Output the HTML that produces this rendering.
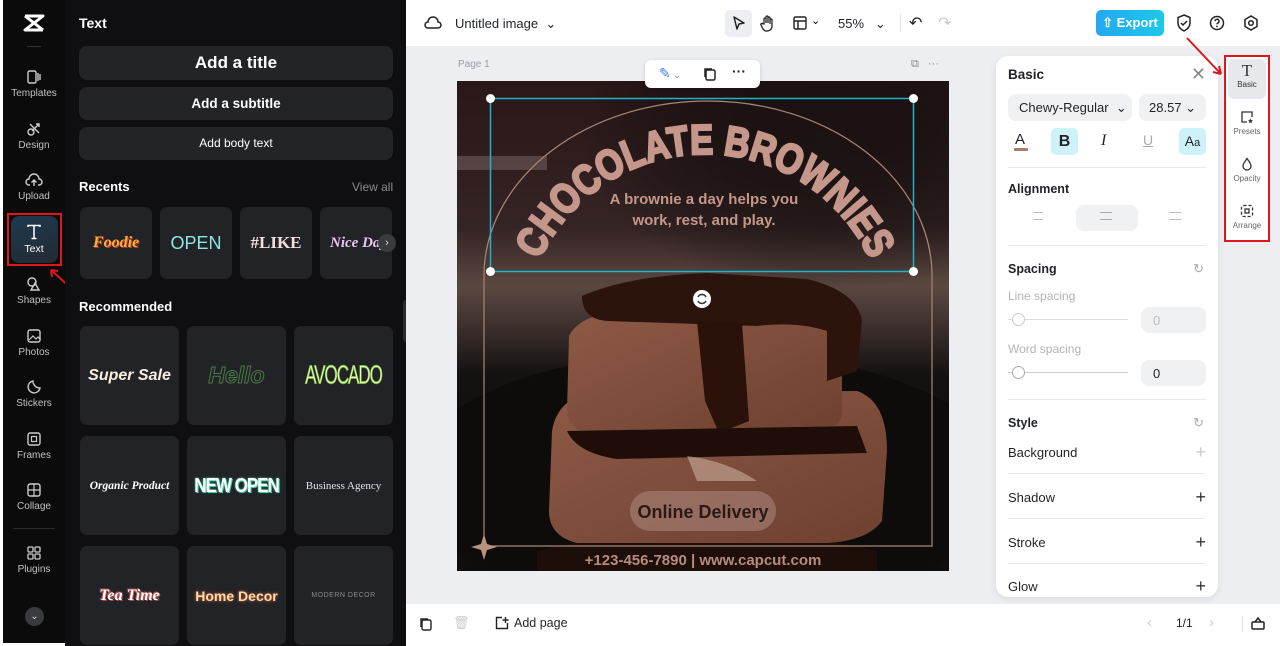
<!DOCTYPE html>
<html><head><meta charset="utf-8"><style>
*{box-sizing:border-box;margin:0;padding:0}
body{width:1280px;height:646px;overflow:hidden;background:#fff;font-family:"Liberation Sans",sans-serif;position:relative}
.a{position:absolute}
.side{left:3px;top:0;width:62px;height:643px;background:#0b0b0c}
.nav{position:absolute;left:0;width:62px;text-align:center;color:#bfc1c5;font-size:10px}
.nav svg{display:block;margin:0 auto 3px}
.panel{left:65px;top:0;width:341px;height:646px;background:#0f0f11;color:#fff}
.btn{position:absolute;left:14px;width:314px;background:#232428;border-radius:8px;color:#fff;text-align:center;font-weight:bold}
.tile{position:absolute;background:#222327;border-radius:7px;display:flex;align-items:center;justify-content:center;overflow:hidden;white-space:nowrap}
.top{left:406px;top:0;width:874px;height:46px;background:#fff}
.canvas{left:406px;top:46px;width:874px;height:558px;background:#eceef1}
.bot{left:406px;top:604px;width:872px;height:40px;background:#fff}
.rp{left:996px;top:56px;width:222px;height:541px;background:#fff;border-radius:12px;box-shadow:0 2px 8px rgba(0,0,0,.08);font-size:13px;color:#1f2329}
.hr{position:absolute;left:12px;width:198px;height:1px;background:#e8e9eb}
.lab{position:absolute;left:12px}
.plus{position:absolute;right:12px;font-size:18px;color:#333;line-height:1}
.gbox{position:absolute;background:#f0f1f3;border-radius:8px}
</style></head><body>

<div class="a side">
  <svg class="a" style="left:19px;top:13px" width="24" height="20" viewBox="0 0 24 20"><path d="M3 3h18L3 17h18M3 3l18 14" stroke="#fff" stroke-width="3" fill="none" stroke-linejoin="round"/></svg>
  <div class="a" style="left:24px;top:46px;width:14px;height:1px;background:#333"></div>
  <div class="nav" style="top:69px"><svg width="16" height="16" viewBox="0 0 16 16"><rect x="2" y="2" width="8" height="12" rx="1.5" stroke="#ccc" fill="none" stroke-width="1.4"/><path d="M12 4v8M14 5v6" stroke="#ccc" stroke-width="1.4"/></svg>Templates</div>
  <div class="nav" style="top:121px"><svg width="16" height="16" viewBox="0 0 16 16"><circle cx="5" cy="11" r="3" stroke="#ccc" fill="none" stroke-width="1.4"/><path d="M4 3l9 9M13 3L6 10M10 3h3v3" stroke="#ccc" fill="none" stroke-width="1.4"/></svg>Design</div>
  <div class="nav" style="top:172px"><svg width="18" height="16" viewBox="0 0 18 16"><path d="M5 13H4a3 3 0 0 1 0-6 5 5 0 0 1 10 0 3 3 0 0 1 0 6h-1M9 14V8M6.5 10.5L9 8l2.5 2.5" stroke="#ccc" fill="none" stroke-width="1.4"/></svg>Upload</div>
  <div class="a" style="left:4px;top:213px;width:55px;height:53px;border:2px solid #e0161b"></div>
  <div class="a" style="left:8px;top:216px;width:47px;height:47px;border-radius:8px;background:linear-gradient(160deg,#1d3a4f,#242a32)"></div>
  <div class="nav" style="top:224px;color:#fff;font-size:10.5px"><svg width="16" height="16" viewBox="0 0 16 16"><path d="M2 3V1.5h12V3M8 1.5V14.5M5.5 14.5h5" stroke="#fff" fill="none" stroke-width="1.5"/></svg>Text</div>
  <svg class="a" style="left:44px;top:266px" width="28" height="26" viewBox="0 0 28 26"><path d="M26 24L4 4M4 4l1 7M4 4l7 1" stroke="#e0161b" stroke-width="2" fill="none"/></svg>
  <div class="nav" style="top:276px"><svg width="16" height="16" viewBox="0 0 16 16"><circle cx="6" cy="6" r="4" stroke="#ccc" fill="none" stroke-width="1.4"/><path d="M9 7l4 7H5z" stroke="#ccc" fill="none" stroke-width="1.4"/></svg>Shapes</div>
  <div class="nav" style="top:328px"><svg width="16" height="16" viewBox="0 0 16 16"><rect x="2" y="2" width="12" height="12" rx="2" stroke="#ccc" fill="none" stroke-width="1.4"/><path d="M3 12l4-4 3 3 2-2 2 2" stroke="#ccc" fill="none" stroke-width="1.2"/></svg>Photos</div>
  <div class="nav" style="top:379px"><svg width="16" height="16" viewBox="0 0 16 16"><path d="M14 9A6 6 0 1 1 7 2c0 4 3 7 7 7z" stroke="#ccc" fill="none" stroke-width="1.4"/></svg>Stickers</div>
  <div class="nav" style="top:431px"><svg width="16" height="16" viewBox="0 0 16 16"><rect x="2" y="2" width="12" height="12" rx="2" stroke="#ccc" fill="none" stroke-width="1.4"/><rect x="5.5" y="5.5" width="5" height="5" stroke="#ccc" fill="none" stroke-width="1.2"/></svg>Frames</div>
  <div class="nav" style="top:482px"><svg width="16" height="16" viewBox="0 0 16 16"><rect x="2" y="2" width="12" height="12" rx="2" stroke="#ccc" fill="none" stroke-width="1.4"/><path d="M8 2v12M2 8h12" stroke="#ccc" stroke-width="1.2"/></svg>Collage</div>
  <div class="a" style="left:10px;top:528px;width:42px;height:1px;background:#2a2a2a"></div>
  <div class="nav" style="top:545px"><svg width="16" height="16" viewBox="0 0 16 16"><rect x="2" y="2" width="5" height="5" rx="1" stroke="#ccc" fill="none" stroke-width="1.3"/><rect x="9" y="2" width="5" height="5" rx="1" stroke="#ccc" fill="none" stroke-width="1.3"/><rect x="2" y="9" width="5" height="5" rx="1" stroke="#ccc" fill="none" stroke-width="1.3"/><rect x="9" y="9" width="5" height="5" rx="1" stroke="#ccc" fill="none" stroke-width="1.3"/></svg>Plugins</div>
  <div class="a" style="left:22px;top:607px;width:19px;height:19px;border-radius:50%;background:#3a3b3f;color:#ccc;font-size:10px;text-align:center;line-height:19px">⌄</div>
</div>

<div class="a panel">
  <div class="a" style="left:14px;top:15px;font-size:14px;font-weight:bold">Text</div>
  <div class="btn" style="top:46px;height:34px;line-height:34px;font-size:17px">Add a title</div>
  <div class="btn" style="top:87px;height:33px;line-height:33px;font-size:13.5px">Add a subtitle</div>
  <div class="btn" style="top:127px;height:33px;line-height:33px;font-size:12px;font-weight:normal">Add body text</div>
  <div class="a" style="left:14px;top:179px;font-size:13px;font-weight:bold">Recents</div>
  <div class="a" style="left:287px;top:180px;font-size:12px;color:#8a8b8f">View all</div>
  <div class="tile" style="left:15px;top:207px;width:72px;height:72px;color:#f7b13a;font-weight:bold;font-style:italic;font-size:16px;font-family:'Liberation Serif',serif;text-shadow:1px 1px 0 #c0392b">Foodie</div>
  <div class="tile" style="left:95px;top:207px;width:72px;height:72px;color:#8ee6e0;font-size:18px">OPEN</div>
  <div class="tile" style="left:175px;top:207px;width:72px;height:72px;color:#f3dede;font-size:17px;font-weight:bold;font-family:'Liberation Serif',serif">#LIKE</div>
  <div class="tile" style="left:255px;top:207px;width:72px;height:72px;justify-content:flex-start;padding-left:10px;color:#e9c8f0;font-style:italic;font-weight:bold;font-size:15px;font-family:'Liberation Serif',serif">Nice Day</div>
  <div class="a" style="left:313px;top:234px;width:18px;height:18px;border-radius:50%;background:#3a3b3f;color:#ddd;font-size:11px;text-align:center;line-height:18px">›</div>
  <div class="a" style="left:14px;top:299px;font-size:13px;font-weight:bold">Recommended</div>
  <div class="tile" style="left:15px;top:326px;width:99px;height:99px;color:#fbeedd;font-weight:bold;font-style:italic;font-size:16px">Super Sale</div>
  <div class="tile" style="left:122px;top:326px;width:99px;height:99px;color:transparent;-webkit-text-stroke:1px #4a7a45;font-weight:bold;font-style:italic;font-size:23px">Hello</div>
  <div class="tile" style="left:229px;top:326px;width:99px;height:99px;color:#f2f7d8;-webkit-text-stroke:0.6px #7bbf34;font-size:17px;letter-spacing:-1px"><span style="display:inline-block;transform:scaleY(1.5)">AVOCADO</span></div>
  <div class="tile" style="left:15px;top:436px;width:99px;height:99px;color:#fff;font-style:italic;font-size:11.5px;font-family:'Liberation Serif',serif;font-weight:bold">Organic Product</div>
  <div class="tile" style="left:122px;top:436px;width:99px;height:99px;color:#fff;font-weight:bold;font-size:17px;letter-spacing:-1px;text-shadow:0 0 2px #3ed1a0,1px 1px 0 #3ed1a0"><span style="display:inline-block;transform:scaleY(1.2)">NEW OPEN</span></div>
  <div class="tile" style="left:229px;top:436px;width:99px;height:99px;color:#dfe3ea;font-size:11px;font-family:'Liberation Serif',serif">Business Agency</div>
  <div class="tile" style="left:15px;top:546px;width:99px;height:99px;color:#fff;font-weight:bold;font-style:italic;font-size:16px;font-family:'Liberation Serif',serif;text-shadow:1px 1px 0 #b04848,-1px -1px 0 #b04848">Tea Time</div>
  <div class="tile" style="left:122px;top:546px;width:99px;height:99px;color:#ffd9a8;font-weight:bold;font-size:14px;text-shadow:0 0 3px #d2693a">Home Decor</div>
  <div class="tile" style="left:229px;top:546px;width:99px;height:99px;color:#8a8b8f;font-size:7px;letter-spacing:0.5px">MODERN DECOR</div>
</div>
<div class="a" style="left:403px;top:300px;width:8px;height:42px;background:#2a2b2e;border-radius:3px"></div>

<div class="a top">
  <svg class="a" style="left:18px;top:15px" width="18" height="16" viewBox="0 0 18 16"><path d="M5 13H4a3 3 0 0 1 0-6 5 5 0 0 1 10 0 3 3 0 0 1 0 6z" stroke="#222" fill="none" stroke-width="1.5"/></svg>
  <div class="a" style="left:49px;top:16px;font-size:13px;color:#1f2329">Untitled image &nbsp;⌄</div>
  <div class="a" style="left:319px;top:10px;width:27px;height:27px;background:#eceef1;border-radius:5px"></div>
  <svg class="a" style="left:325px;top:15px" width="16" height="17" viewBox="0 0 16 17"><path d="M3 2l10 6-5 1-2 5z" stroke="#222" fill="none" stroke-width="1.5" stroke-linejoin="round"/></svg>
  <svg class="a" style="left:354px;top:14px" width="16" height="18" viewBox="0 0 16 18"><path d="M4 10V5a1 1 0 0 1 2 0v4V3a1 1 0 0 1 2 0v6V4a1 1 0 0 1 2 0v6-4a1 1 0 0 1 2 0v6a5 5 0 0 1-9 3l-2-4a1 1 0 0 1 2-1z" stroke="#222" fill="none" stroke-width="1.3"/></svg>
  <svg class="a" style="left:387px;top:16px" width="14" height="14" viewBox="0 0 14 14"><rect x="1" y="1" width="12" height="12" rx="1.5" stroke="#222" fill="none" stroke-width="1.4"/><path d="M1 5h12M5 5v8" stroke="#222" stroke-width="1.4"/></svg>
  <div class="a" style="left:405px;top:14px;font-size:11px">⌄</div>
  <div class="a" style="left:432px;top:16px;font-size:13px;color:#1f2329">55% &nbsp;&nbsp;⌄</div>
  <div class="a" style="left:494px;top:14px;width:1px;height:18px;background:#e3e3e3"></div>
  <div class="a" style="left:503px;top:13px;font-size:16px;color:#222">↶</div>
  <div class="a" style="left:532px;top:13px;font-size:16px;color:#ccc">↷</div>
  <div class="a" style="left:690px;top:10px;width:68px;height:26px;border-radius:5px;background:linear-gradient(90deg,#22a8f0,#1ec8e8);color:#fff;font-size:13px;font-weight:bold;line-height:26px;text-align:center">⇧ Export</div>
  <svg class="a" style="left:770px;top:14px" width="16" height="18" viewBox="0 0 16 18"><path d="M8 1l6 2.5V9c0 4-3 6.5-6 8-3-1.5-6-4-6-8V3.5z" stroke="#222" fill="none" stroke-width="1.5"/><path d="M5 9l2 2 4-4" stroke="#222" fill="none" stroke-width="1.5"/></svg>
  <svg class="a" style="left:803px;top:15px" width="16" height="16" viewBox="0 0 16 16"><circle cx="8" cy="8" r="6.5" stroke="#222" fill="none" stroke-width="1.5"/><path d="M6 6.2a2 2 0 1 1 2.5 2c-.4.2-.5.5-.5 1.2" stroke="#222" fill="none" stroke-width="1.4"/><circle cx="8" cy="11.5" r=".9" fill="#222"/></svg>
  <svg class="a" style="left:837px;top:15px" width="16" height="16" viewBox="0 0 16 16"><path d="M8 1l6 3.5v7L8 15l-6-3.5v-7z" stroke="#222" fill="none" stroke-width="1.5"/><circle cx="8" cy="8" r="2.3" stroke="#222" fill="none" stroke-width="1.5"/></svg>
</div>

<div class="a canvas">
  <div class="a" style="left:52px;top:13px;font-size:10px;color:#9a9da3">Page 1</div>
  <div class="a" style="left:505px;top:12px;font-size:11px;color:#888">⧉ &nbsp;&nbsp;···</div>
</div>

<svg class="a" style="left:457px;top:81px" width="492" height="490" viewBox="0 0 492 490">
  <defs>
    <linearGradient id="bg" x1="0" y1="0" x2="0" y2="1"><stop offset="0" stop-color="#2a1718"/><stop offset=".3" stop-color="#352425"/><stop offset=".42" stop-color="#5a4840"/><stop offset=".5" stop-color="#3d302c"/><stop offset=".6" stop-color="#141111"/><stop offset="1" stop-color="#100d0d"/></linearGradient>
    <linearGradient id="br" x1="0" y1="0" x2="1" y2="1"><stop offset="0" stop-color="#8e5a46"/><stop offset="1" stop-color="#6e4030"/></linearGradient>
    <radialGradient id="lt" cx=".75" cy=".2" r=".5"><stop offset="0" stop-color="#1a1212" stop-opacity=".9"/><stop offset="1" stop-color="#000" stop-opacity="0"/></radialGradient>
  </defs>
  <rect width="492" height="490" fill="url(#bg)"/>
  <rect width="492" height="300" fill="url(#lt)"/>
  <rect x="0" y="75" width="90" height="14" fill="#9a8a88" opacity=".35"/>
  <ellipse cx="250" cy="400" rx="300" ry="130" fill="#0e0b0b"/>
  <path d="M80 470 Q250 430 420 470 L420 490 L80 490z" fill="#1e0e09"/>
  <path d="M95 350 Q100 320 130 312 L400 310 Q430 320 430 370 L425 440 Q410 460 370 462 L120 462 Q92 455 92 430z" fill="url(#br)"/>
  <path d="M112 255 Q120 238 150 232 L360 235 Q385 240 385 265 L385 335 Q380 350 355 352 L130 352 Q112 348 110 330z" fill="url(#br)"/>
  <path d="M125 215 Q170 195 250 192 L350 198 Q400 210 405 240 L400 290 L370 300 L370 250 Q340 240 300 245 L150 240 Q125 238 125 215z" fill="#2c140d"/>
  <path d="M240 240 L285 242 L292 340 L262 352 L248 320z" fill="#2a120b"/>
  <path d="M110 350 L400 345 L410 372 L160 378 Q120 372 110 350z" fill="#1f0d08"/>
  <path d="M230 375 Q270 380 300 400 L240 400z" fill="#d8c0b0" opacity=".5"/>
  <path d="M27 455 V195 A224 175 0 0 1 475 195 V465 H27" stroke="#a88678" stroke-width="1.2" fill="none"/>
  <path d="M27 453 l3 10 10 3-10 3-3 10-3-10-10-3 10-3z" fill="#b8917f"/>
  <path id="arc" d="M66 255 A182 182 0 0 1 430 255" fill="none"/>
  <text font-family="Liberation Sans,sans-serif" font-weight="bold" font-size="42" fill="#c4978a" stroke="#c4978a" stroke-width="2.5"><textPath href="#arc" startOffset="50%" text-anchor="middle" textLength="415" lengthAdjust="spacingAndGlyphs">CHOCOLATE BROWNIES</textPath></text>
  <text x="247" y="123" text-anchor="middle" font-family="Liberation Sans,sans-serif" font-weight="bold" font-size="15" fill="#c4978a">A brownie a day helps you</text>
  <text x="247" y="144" text-anchor="middle" font-family="Liberation Sans,sans-serif" font-weight="bold" font-size="15" fill="#c4978a">work, rest, and play.</text>
  <rect x="173" y="410" width="146" height="40" rx="20" fill="#a8837a" opacity=".6"/>
  <text x="246" y="437" text-anchor="middle" font-family="Liberation Sans,sans-serif" font-weight="bold" font-size="18" fill="#2a1a16">Online Delivery</text>
  <text x="246" y="484" text-anchor="middle" font-family="Liberation Sans,sans-serif" font-weight="bold" font-size="15" fill="#b58c7e">+123-456-7890  |  www.capcut.com</text>
  <rect x="33.5" y="17.5" width="423" height="173" fill="none" stroke="#1fb3c9" stroke-width="1.5"/>
  <circle cx="33.5" cy="17.5" r="4.5" fill="#fff"/><circle cx="456.5" cy="17.5" r="4.5" fill="#fff"/>
  <circle cx="33.5" cy="190.5" r="4.5" fill="#fff"/><circle cx="456.5" cy="190.5" r="4.5" fill="#fff"/>
  <circle cx="245" cy="218" r="9" fill="#fff"/>
  <path d="M241 216a4.5 4.5 0 0 1 8 0M249 220a4.5 4.5 0 0 1-8 0" stroke="#333" stroke-width="1.5" fill="none"/>
</svg>

<div class="a" style="left:645px;top:60px;width:115px;height:28px;background:#fff;border-radius:6px;box-shadow:0 1px 4px rgba(0,0,0,.15)">
  <div class="a" style="left:14px;top:5px;font-size:14px;color:#3b82f6">✎<span style="font-size:9px;color:#888"> ⌄</span></div>
  <svg class="a" style="left:58px;top:7px" width="14" height="14" viewBox="0 0 14 14"><rect x="3" y="3" width="9" height="10" rx="1.5" stroke="#222" fill="none" stroke-width="1.5"/><path d="M2 10V2h7" stroke="#222" fill="none" stroke-width="1.5"/></svg>
  <div class="a" style="left:87px;top:3px;font-size:14px;font-weight:bold;color:#222">···</div>
</div>

<div class="a rp">
  <div class="a" style="left:12px;top:11px;font-size:13.5px;font-weight:bold">Basic</div>
  <div class="a" style="right:12px;top:8px;font-size:18px;color:#888">✕</div>
  <div class="gbox" style="left:12px;top:38px;width:124px;height:27px"><span class="a" style="left:11px;top:6px">Chewy-Regular &nbsp;⌄</span></div>
  <div class="gbox" style="left:143px;top:38px;width:67px;height:27px"><span class="a" style="left:10px;top:6px">28.57 ⌄</span></div>
  <div class="a" style="left:19px;top:75px;font-size:15px">A</div><div class="a" style="left:18px;top:92px;width:14px;height:3px;background:#b07a6a;border-radius:1px"></div>
  <div class="a" style="left:55px;top:72px;width:27px;height:27px;background:#cdf3f8;border-radius:5px;text-align:center;line-height:27px;font-size:16px;font-weight:bold">B</div>
  <div class="a" style="left:105px;top:76px;font-size:16px;font-style:italic;font-family:'Liberation Serif',serif">I</div>
  <div class="a" style="left:147px;top:76px;font-size:14px;color:#aaa;text-decoration:underline">U</div>
  <div class="a" style="left:183px;top:72px;width:27px;height:27px;background:#cdf3f8;border-radius:5px;text-align:center;line-height:27px;font-size:14px">A<span style="font-size:11px">a</span></div>
  <div class="hr" style="top:111px"></div>
  <div class="lab" style="top:126px;font-weight:bold;font-size:12.5px">Alignment</div>
  <div class="gbox" style="left:80px;top:149px;width:62px;height:26px"></div>
  <div class="a" style="left:37px;top:156px;width:10px;height:8px;border-top:1px solid #bbb;border-bottom:1px solid #bbb"></div>
  <div class="a" style="left:104px;top:156px;width:12px;height:8px;border-top:1px solid #aaa;border-bottom:1px solid #aaa"></div>
  <div class="a" style="left:173px;top:156px;width:12px;height:8px;border-top:1px solid #bbb;border-bottom:1px solid #bbb"></div>
  <div class="hr" style="top:189px"></div>
  <div class="lab" style="top:206px;font-weight:bold;font-size:12.5px">Spacing</div>
  <div class="a" style="right:14px;top:205px;color:#aaa">↻</div>
  <div class="lab" style="top:233px;color:#b0b3b8;font-size:12px">Line spacing</div>
  <div class="a" style="left:12px;top:263px;width:120px;height:1px;background:#ddd"></div>
  <div class="a" style="left:16px;top:257px;width:13px;height:13px;border-radius:50%;background:#fff;border:1px solid #ccc"></div>
  <div class="gbox" style="left:145px;top:251px;width:65px;height:26px"><span class="a" style="left:12px;top:6px;color:#bbb">0</span></div>
  <div class="lab" style="top:286px;color:#b0b3b8;font-size:12px">Word spacing</div>
  <div class="a" style="left:12px;top:316px;width:120px;height:1px;background:#ccc"></div>
  <div class="a" style="left:16px;top:310px;width:13px;height:13px;border-radius:50%;background:#fff;border:1px solid #aaa"></div>
  <div class="gbox" style="left:145px;top:304px;width:65px;height:26px"><span class="a" style="left:12px;top:6px">0</span></div>
  <div class="hr" style="top:343px"></div>
  <div class="lab" style="top:360px;font-weight:bold;font-size:12.5px">Style</div>
  <div class="a" style="right:14px;top:359px;color:#aaa">↻</div>
  <div class="lab" style="top:389px">Background</div><div class="plus" style="top:387px;color:#ccc">+</div>
  <div class="hr" style="top:417px"></div>
  <div class="lab" style="top:434px">Shadow</div><div class="plus" style="top:432px">+</div>
  <div class="hr" style="top:462px"></div>
  <div class="lab" style="top:479px">Stroke</div><div class="plus" style="top:477px">+</div>
  <div class="hr" style="top:507px"></div>
  <div class="lab" style="top:523px">Glow</div><div class="plus" style="top:521px">+</div>
</div>

<div class="a" style="left:1224px;top:55px;width:46px;height:187px;background:#fff;border:2px solid #e0161b"></div>
<div class="a" style="left:1228px;top:59px;width:38px;height:40px;background:#e6e8eb;border-radius:6px"></div>
<div class="a" style="left:1226px;top:62px;width:42px;text-align:center;font-size:8px;color:#333"><div style="font-size:17px;font-family:'Liberation Serif',serif;line-height:18px">T</div>Basic</div>
<div class="a" style="left:1226px;top:110px;width:42px;text-align:center;font-size:8px;color:#666"><svg width="14" height="14" viewBox="0 0 14 14" style="display:block;margin:0 auto 3px"><path d="M7 12H2V2h10v5" stroke="#333" fill="none" stroke-width="1.3"/><path d="M10.5 8.5l.8 1.6 1.7.2-1.3 1.2.3 1.7-1.5-.8-1.5.8.3-1.7-1.3-1.2 1.7-.2z" fill="#333"/></svg>Presets</div>
<div class="a" style="left:1226px;top:157px;width:42px;text-align:center;font-size:8px;color:#666"><svg width="14" height="14" viewBox="0 0 14 14" style="display:block;margin:0 auto 3px"><path d="M7 1.5C5 4.5 3 6.5 3 9a4 4 0 0 0 8 0c0-2.5-2-4.5-4-7.5z" stroke="#333" fill="none" stroke-width="1.3"/></svg>Opacity</div>
<div class="a" style="left:1226px;top:204px;width:42px;text-align:center;font-size:8px;color:#666"><svg width="14" height="14" viewBox="0 0 14 14" style="display:block;margin:0 auto 3px"><rect x="1.5" y="1.5" width="11" height="11" rx="2" stroke="#333" fill="none" stroke-width="1.3" stroke-dasharray="3 2"/><rect x="5" y="5" width="4" height="4" stroke="#333" fill="none" stroke-width="1.3"/></svg>Arrange</div>
<svg class="a" style="left:1185px;top:36px" width="40" height="42" viewBox="0 0 40 42"><path d="M2 2l34 36M36 38l-2-8M36 38l-8-2" stroke="#e0161b" stroke-width="2" fill="none"/></svg>

<div class="a bot">
  <svg class="a" style="left:13px;top:13px" width="14" height="14" viewBox="0 0 14 14"><rect x="3" y="3" width="9" height="10" rx="1.5" stroke="#222" fill="none" stroke-width="1.4"/><path d="M2 10V2h7" stroke="#222" fill="none" stroke-width="1.4"/></svg>
  <div class="a" style="left:47px;top:11px;font-size:13px;color:#ccc">🗑</div>
  <svg class="a" style="left:88px;top:12px" width="15" height="15" viewBox="0 0 15 15"><path d="M8 1.5H2.5v11h11V7M11.5 1v6M8.5 4h6" stroke="#222" fill="none" stroke-width="1.4"/></svg>
  <div class="a" style="left:108px;top:12px;font-size:12.5px;color:#1f2329">Add page</div>
  <div class="a" style="left:741px;top:10px;font-size:15px;color:#ccc">‹</div>
  <div class="a" style="left:770px;top:12px;font-size:12px;color:#222">1/1</div>
  <div class="a" style="left:803px;top:10px;font-size:15px;color:#ccc">›</div>
  <div class="a" style="left:836px;top:12px;width:1px;height:16px;background:#e3e3e3"></div>
  <svg class="a" style="left:844px;top:11px" width="16" height="16" viewBox="0 0 16 16"><rect x="2" y="7" width="12" height="7" rx="1" stroke="#222" fill="none" stroke-width="1.5"/><path d="M5 7l3-4 3 4" stroke="#222" fill="none" stroke-width="1.5"/></svg>
</div>
</body></html>
